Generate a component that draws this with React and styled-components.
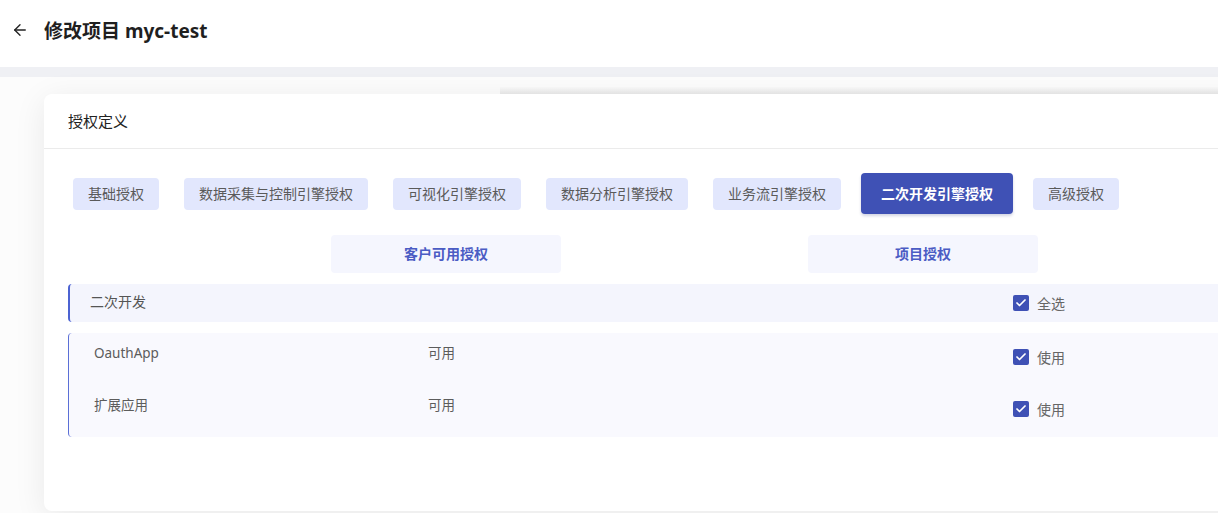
import styled, { createGlobalStyle } from "styled-components";
import { ArrowLeft, Check } from "lucide-react";

const GlobalStyle = createGlobalStyle`
  html, body {
    margin: 0;
    padding: 0;
    background: #fcfcfc;
    font-family: "Noto Sans", "Noto Sans CJK SC", sans-serif;
    overflow: hidden;
  }
  * { box-sizing: border-box; }
`;

const tabs = [
  "基础授权",
  "数据采集与控制引擎授权",
  "可视化引擎授权",
  "数据分析引擎授权",
  "业务流引擎授权",
  "二次开发引擎授权",
  "高级授权",
];

const items = [
  { name: "OauthApp", status: "可用" },
  { name: "扩展应用", status: "可用" },
];

const CheckItem = ({ label }) => (
  <CheckWrap>
    <Box>
      <Check size={12} strokeWidth={3.5} color="#fff" />
    </Box>
    <CheckText>{label}</CheckText>
  </CheckWrap>
);

export default function App() {
  return (
    <>
      <GlobalStyle />
      <Page>
        <Header>
          <BackBtn>
            <ArrowLeft size={18} strokeWidth={1.8} />
          </BackBtn>
          <Title>修改项目 myc-test</Title>
        </Header>
        <Band />
        <Main>
          <Strip />
          <Card>
            <CardHead>授权定义</CardHead>
            <CardBody>
              <TabRow>
                {tabs.map((t) => (
                  <Tab key={t} $active={t === "二次开发引擎授权"}>
                    {t}
                  </Tab>
                ))}
              </TabRow>
              <SubHead>
                <span />
                <SubBox>客户可用授权</SubBox>
                <span />
                <SubBox>项目授权</SubBox>
              </SubHead>
              <GroupHead>
                <GroupLabel>二次开发</GroupLabel>
                <span />
                <CheckItem label="全选" />
              </GroupHead>
              <Group>
                {items.map((it) => (
                  <ItemRow key={it.name}>
                    <ItemText>{it.name}</ItemText>
                    <ItemText>{it.status}</ItemText>
                    <CheckCell>
                      <CheckItem label="使用" />
                    </CheckCell>
                  </ItemRow>
                ))}
              </Group>
            </CardBody>
          </Card>
        </Main>
      </Page>
    </>
  );
}

const Page = styled.div`
  width: 1218px;
  height: 513px;
  display: flex;
  flex-direction: column;
  overflow: hidden;
`;

const Header = styled.div`
  height: 67px;
  flex-shrink: 0;
  background: #fff;
  display: flex;
  align-items: center;
  padding: 0 0 8px 11px;
`;

const BackBtn = styled.div`
  display: flex;
  align-items: center;
  color: #222;
  margin-right: 15px;
`;

const Title = styled.div`
  font-size: 19px;
  font-weight: 700;
  color: #1f1f1f;
`;

const Band = styled.div`
  height: 10px;
  flex-shrink: 0;
  background: #eff0f4;
`;

const Main = styled.div`
  flex: 1;
  padding: 10px 0 0 44px;
  background: #fcfcfc;
`;

const Strip = styled.div`
  height: 7px;
  margin-left: 456px;
  background: linear-gradient(#fafafa, #e9e9e9);
`;

const Card = styled.div`
  width: 1240px;
  height: 417px;
  background: #fff;
  border-radius: 8px;
  box-shadow: 0 6px 32px rgba(0, 0, 0, 0.08);
`;

const CardHead = styled.div`
  height: 55px;
  padding: 0 24px 2px;
  display: flex;
  align-items: center;
  font-size: 15px;
  color: #222;
  border-bottom: 1px solid #ebebeb;
`;

const CardBody = styled.div`
  padding: 24px 0 0 24px;
`;

const TabRow = styled.div`
  display: flex;
  align-items: center;
  gap: 25px;
  padding-left: 5px;
  height: 41px;
`;

const Tab = styled.div`
  height: ${(p) => (p.$active ? "41px" : "32px")};
  padding: 0 ${(p) => (p.$active ? "20px" : "15px")} 2px;
  margin: 0 ${(p) => (p.$active ? "-5px" : "0")};
  display: flex;
  align-items: center;
  border-radius: 4px;
  font-size: 14px;
  font-weight: ${(p) => (p.$active ? 700 : 400)};
  background: ${(p) => (p.$active ? "#3f51b5" : "#e2e7fd")};
  color: ${(p) => (p.$active ? "#fff" : "#5a5a5a")};
  box-shadow: ${(p) => (p.$active ? "0 2px 3px rgba(40,50,120,0.2)" : "none")};
  white-space: nowrap;
`;

const SubHead = styled.div`
  display: grid;
  grid-template-columns: 263px 230px 247px 230px;
  margin-top: 21px;
`;

const SubBox = styled.div`
  height: 38px;
  padding-bottom: 2px;
  display: flex;
  align-items: center;
  justify-content: center;
  background: #f5f6fe;
  border-radius: 4px;
  color: #4b5cc4;
  font-size: 14px;
  font-weight: 700;
`;

const GroupHead = styled.div`
  margin-top: 11px;
  height: 38px;
  display: grid;
  grid-template-columns: 338px 585px auto;
  align-items: center;
  padding-left: 20px;
  background: #f4f5fd;
  border-left: 2px solid #4c63d2;
  border-radius: 4px 0 0 4px;
`;

const GroupLabel = styled.div`
  font-size: 14px;
  color: #555;
  margin-top: -4px;
`;

const Group = styled.div`
  margin-top: 11px;
  background: #f9f9fe;
  border-left: 1px solid #5b6fd6;
  border-radius: 4px 0 0 4px;
`;

const ItemRow = styled.div`
  height: 52px;
  display: grid;
  grid-template-columns: 334px 585px auto;
  align-items: start;
  padding: 10px 0 0 25px;
`;

const ItemText = styled.div`
  font-size: 13.5px;
  line-height: 20px;
  color: #5c5c5c;
`;

const CheckCell = styled.div`
  margin-top: 4px;
  height: 20px;
  display: flex;
  align-items: center;
`;

const CheckWrap = styled.div`
  display: flex;
  align-items: center;
  gap: 8px;
`;

const Box = styled.div`
  width: 16px;
  height: 16px;
  border-radius: 2px;
  background: #3f51b5;
  display: flex;
  align-items: center;
  justify-content: center;
`;

const CheckText = styled.span`
  font-size: 14px;
  color: #666;
`;
